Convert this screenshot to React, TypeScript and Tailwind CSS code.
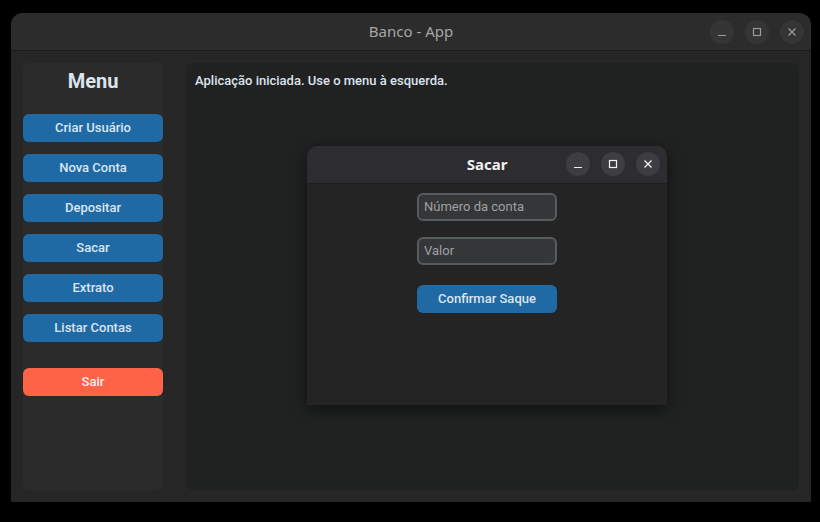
import React from 'react';

const font = { fontFamily: 'Roboto, "Liberation Sans", sans-serif' };

const MENU = ['Criar Usuário', 'Nova Conta', 'Depositar', 'Sacar', 'Extrato', 'Listar Contas'];

function WinButtons({ bg, stroke }: { bg: string; stroke: string }) {
  return (
    <div className="flex gap-[11px]">
      <div className={`w-6 h-6 rounded-full flex items-center justify-center ${bg}`}>
        <svg width="10" height="10" viewBox="0 0 10 10"><path d="M1 8.5h8" stroke={stroke} strokeWidth="1.2" /></svg>
      </div>
      <div className={`w-6 h-6 rounded-full flex items-center justify-center ${bg}`}>
        <svg width="10" height="10" viewBox="0 0 10 10"><rect x="1.5" y="1.5" width="7" height="7" fill="none" stroke={stroke} strokeWidth="1.2" /></svg>
      </div>
      <div className={`w-6 h-6 rounded-full flex items-center justify-center ${bg}`}>
        <svg width="10" height="10" viewBox="0 0 10 10"><path d="M1.5 1.5l7 7M8.5 1.5l-7 7" stroke={stroke} strokeWidth="1.3" /></svg>
      </div>
    </div>
  );
}

export default function App() {
  return (
    <div className="relative w-[820px] h-[522px] bg-black pt-[13px] pl-[11px]" style={font}>
      <div className="w-[800px] h-[489px] rounded-t-[12px] bg-[#262626] flex flex-col overflow-hidden">
        {/* title bar */}
        <div className="relative h-[38px] bg-[#2c2c2c] border-b border-[#1b1b1b] flex items-center justify-center shrink-0">
          <span className="text-[15px] text-[#a6a6a6]" style={{ fontFamily: '"Noto Sans", "DejaVu Sans", sans-serif' }}>Banco - App</span>
          <div className="absolute right-[7px] top-[7px]">
            <WinButtons bg="bg-[#353535]" stroke="#9a9a9a" />
          </div>
        </div>
        {/* body */}
        <div className="flex gap-6 px-3 pt-3 pb-3 flex-1">
          <div className="w-[140px] bg-[#2b2b2b] rounded-md flex flex-col">
            <div className="h-[36px] flex items-center justify-center text-[20px] font-bold text-[#dce4ee]">Menu</div>
            <div className="flex flex-col gap-3 mt-[15px]">
              {MENU.map(m => (
                <div key={m} className="h-[28px] rounded-md bg-[#1f6aa5] text-[#dce4ee] text-[13px] font-medium flex items-center justify-center">{m}</div>
              ))}
            </div>
            <div className="h-[28px] mt-[26px] rounded-md bg-[#ff6347] text-[#f0eded] text-[13px] font-medium flex items-center justify-center">Sair</div>
          </div>
          <div className="flex-1 bg-[#202121] rounded-md px-2 pt-[8px]">
            <p className="text-[13px] font-medium text-[#dce4ee]">Aplicação iniciada. Use o menu à esquerda.</p>
          </div>
        </div>
      </div>

      {/* dialog */}
      <div className="absolute left-[307px] top-[146px] w-[360px] h-[259px] rounded-t-[10px] bg-[#242424] flex flex-col overflow-hidden shadow-[0_4px_16px_rgba(0,0,0,0.5)]">
        <div className="relative h-[38px] bg-[#2d2c30] border-b border-[#1e1e1e] flex items-center justify-center shrink-0">
          <span className="text-[15px] font-bold text-[#f0f0f0]" style={{ fontFamily: '"Noto Sans", "DejaVu Sans", sans-serif' }}>Sacar</span>
          <div className="absolute right-[7px] top-[6px]">
            <WinButtons bg="bg-[#3e3d42]" stroke="#f0f0f0" />
          </div>
        </div>
        <div className="flex flex-col items-center pt-[9px]">
          <div className="w-[140px] h-[28px] rounded-md border-2 border-[#565b5e] bg-[#343638] flex items-center px-[5px] text-[13px] text-[#9ea0a2]">Número da conta</div>
          <div className="w-[140px] h-[28px] mt-4 rounded-md border-2 border-[#565b5e] bg-[#343638] flex items-center px-[5px] text-[13px] text-[#9ea0a2]">Valor</div>
          <div className="w-[140px] h-[28px] mt-5 rounded-md bg-[#1f6aa5] text-[#dce4ee] text-[13px] font-medium flex items-center justify-center">Confirmar Saque</div>
        </div>
      </div>
    </div>
  );
}
